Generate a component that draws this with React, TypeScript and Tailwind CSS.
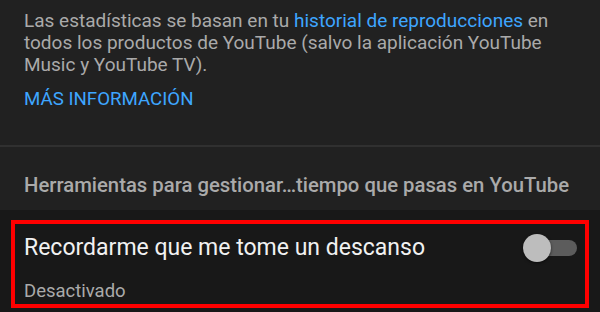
export default function App() {
  return (
    <div className="w-[600px] h-[312px] overflow-hidden bg-[#212121] font-['Roboto',sans-serif]">
      {/* Stats explanation */}
      <div className="px-6 pt-[10px] pb-[35px]">
        <p className="text-[19px] leading-[22px] text-[#aaaaaa] whitespace-nowrap">
          Las estadísticas se basan en tu{" "}
          <span className="text-[#3ea6ff]">historial de reproducciones</span> en
          <br />
          todos los productos de YouTube (salvo la aplicación YouTube
          <br />
          Music y YouTube TV).
        </p>
        <div className="mt-3 text-[18.7px] leading-[22px] text-[#3ea6ff]">MÁS INFORMACIÓN</div>
      </div>

      <div className="h-[2px] bg-[#303030]" />

      {/* Section heading */}
      <div className="px-6 pt-[26px] pb-[13px]">
        <div className="text-[20.3px] leading-[24px] font-medium text-[#aaaaaa] whitespace-nowrap">
          Herramientas para gestionar…tiempo que pasas en YouTube
        </div>
      </div>

      {/* Break reminder row */}
      <div className="bg-[#181818] pt-[10px] h-[102px]">
        <div className="mx-[11px] border-4 border-[#ff0000] pl-[9px] pr-[8px] pt-[10px] pb-[2px]">
          <div className="flex items-center justify-between">
            <div className="text-[23px] leading-[28px] text-[#f1f1f1] whitespace-nowrap">
              Recordarme que me tome un descanso
            </div>
            <div className="relative w-[54px] h-[28px]">
              <div className="absolute right-0 top-[6px] w-[40px] h-[16px] rounded-full bg-[#5c5c5c]" />
              <div className="absolute left-0 top-0 w-[28px] h-[28px] rounded-full bg-[#bdbdbd] shadow-[0_1px_3px_rgba(0,0,0,0.6)]" />
            </div>
          </div>
          <div className="mt-[18px] text-[18.5px] leading-[22px] text-[#aaaaaa]">Desactivado</div>
        </div>
      </div>
    </div>
  );
}
